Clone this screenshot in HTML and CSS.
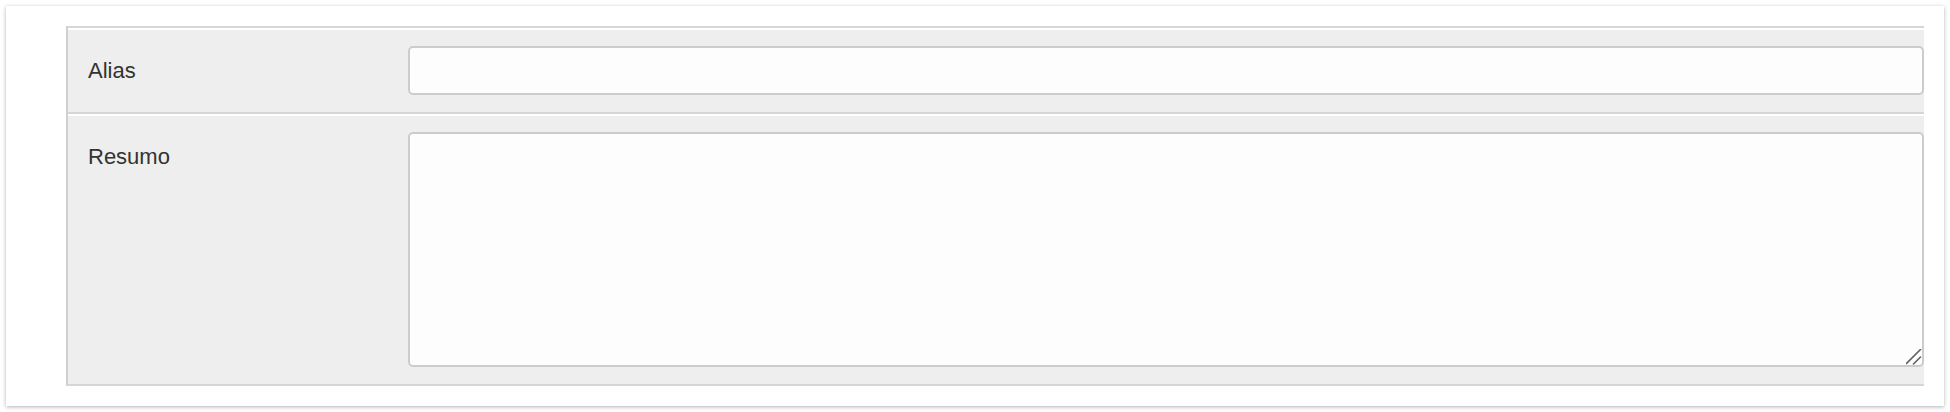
FILE: index.html
```html
<!DOCTYPE html>
<html>
<head>
<meta charset="utf-8">
<link rel="stylesheet" href="styles.css">
</head>
<body>
<div class="panel">
  <div class="form-table">
    <div class="row">
      <div class="label">Alias</div>
      <div class="field"><input class="input" type="text"></div>
    </div>
    <div class="row">
      <div class="label">Resumo</div>
      <div class="field field-area">
        <textarea class="textarea"></textarea>
        <svg class="grip" width="16" height="16" viewBox="0 0 16 16" aria-hidden="true">
          <line x1="0.5" y1="14.5" x2="14.5" y2="0.5" stroke="#606060" stroke-width="1.6" stroke-linecap="round"/>
          <line x1="7.5" y1="15" x2="14.5" y2="8" stroke="#606060" stroke-width="1.6" stroke-linecap="round"/>
        </svg>
      </div>
    </div>
  </div>
</div>
</body>
</html>
```

FILE: styles.css
```css
html, body {
  margin: 0;
  padding: 0;
  background: #ffffff;
}
body {
  font-family: "Liberation Sans", Arial, sans-serif;
  color: #333333;
}
.panel {
  margin: 6px;
  width: 1938px;
  height: 400px;
  box-sizing: border-box;
  padding: 20px 20px 20px 60px;
  background: #ffffff;
  box-shadow: 0 1px 4px rgba(0, 0, 0, 0.3);
}
.form-table {
  border-left: 2px solid #d0d0d0;
  border-bottom: 2px solid #d6d6d6;
  background: #eeeeee;
}
.row {
  display: grid;
  grid-template-columns: 340px 1fr;
  border-top: 2px solid #d6d6d6;
  box-shadow: inset 0 2px 0 #ffffff;
  padding: 18px 0 17px 0;
}
.label {
  font-size: 22px;
  line-height: 30px;
  padding: 10px 0 0 20px;
  color: #333333;
}
.field {
  display: flex;
}
.field-area {
  position: relative;
}
.input, .textarea {
  box-sizing: border-box;
  width: 100%;
  margin: 0;
  border: 2px solid #cccccc;
  border-radius: 5px;
  background: #fdfdfd;
  font-family: "Liberation Sans", Arial, sans-serif;
  font-size: 20px;
  outline: none;
}
.input {
  height: 49px;
}
.textarea {
  height: 235px;
  display: block;
  resize: none;
}
.grip {
  position: absolute;
  right: 2px;
  bottom: 2px;
  display: block;
}
```
